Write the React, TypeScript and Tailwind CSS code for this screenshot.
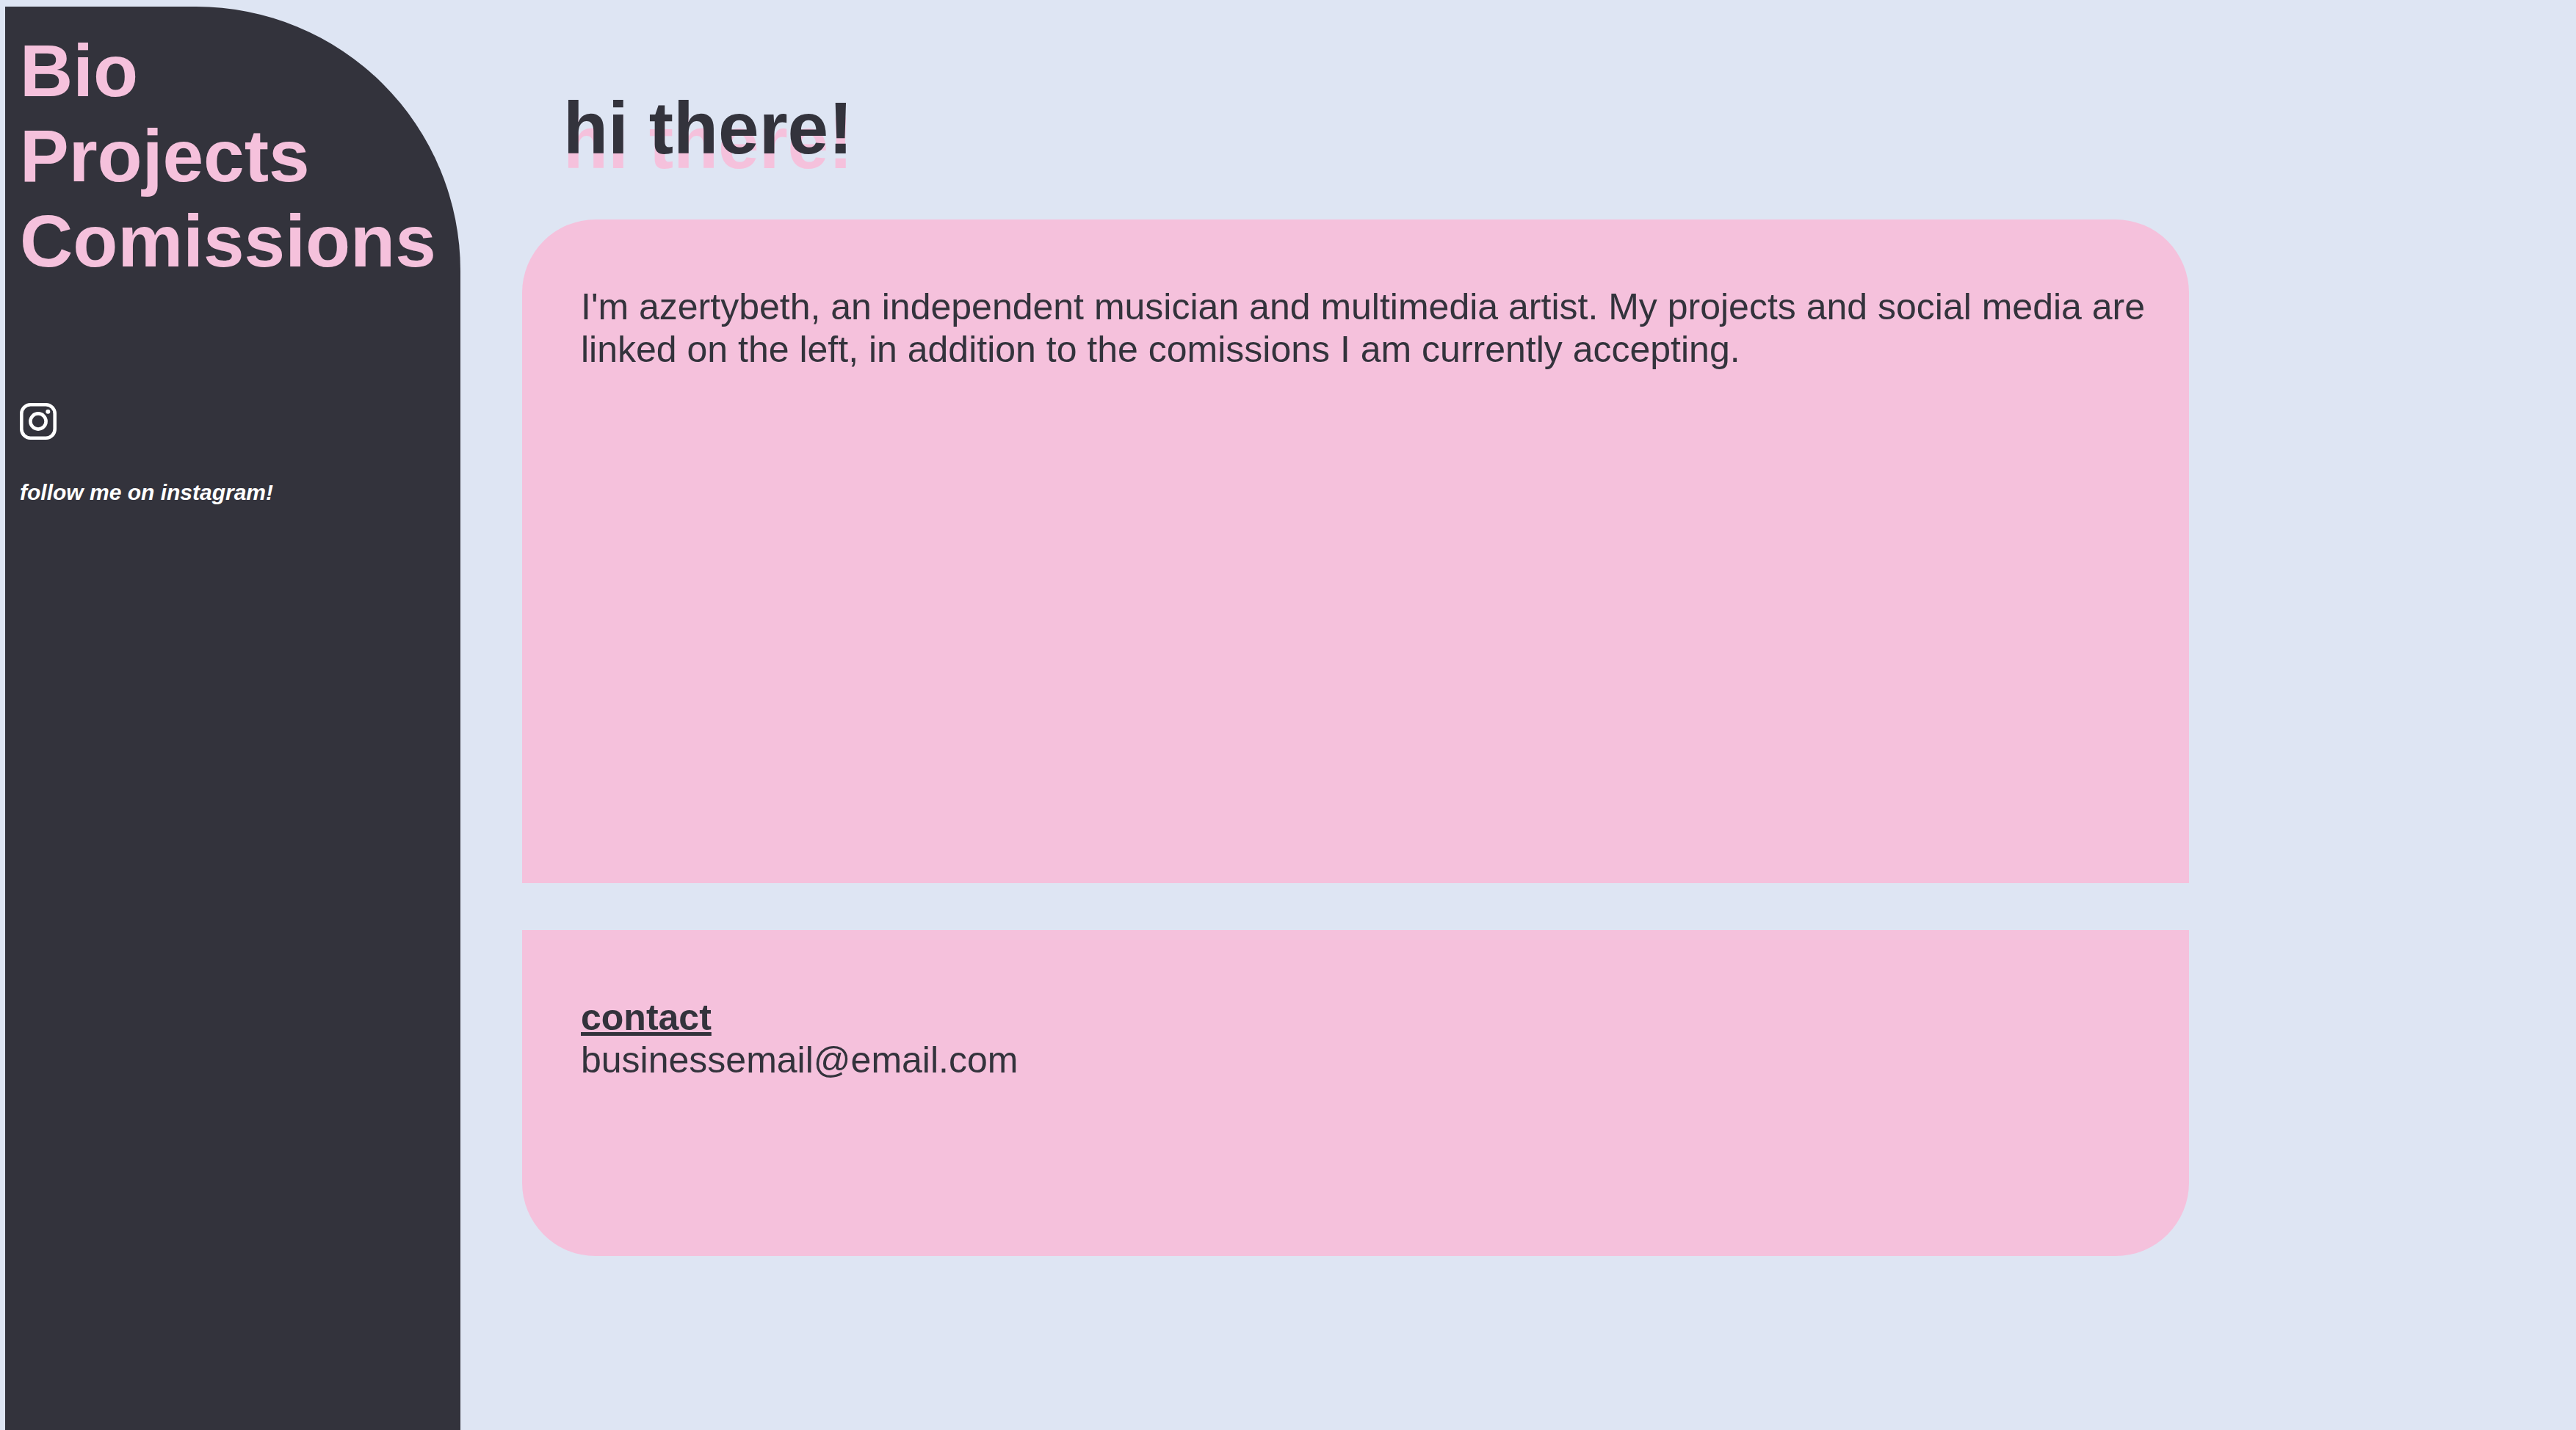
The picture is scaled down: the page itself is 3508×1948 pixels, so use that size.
const links = ["Bio", "Projects", "Comissions"];

function InstagramIcon() {
  return (
    <svg viewBox="0 0 50 50" className="size-[50px]" fill="none" stroke="white" aria-hidden="true">
      <rect x="2.3" y="2.3" width="45.4" height="45.4" rx="12.2" strokeWidth="4.6" />
      <circle cx="25" cy="25" r="10.6" strokeWidth="4.6" />
      <circle cx="38.3" cy="11.7" r="3" fill="white" stroke="none" />
    </svg>
  );
}

function Sidebar() {
  return (
    <aside className="w-[620px] shrink-0 rounded-tr-[360px] bg-[#33333c] px-5 pt-[29px]">
      <nav>
        <ul className="text-[100px] leading-[116px] font-bold text-[#f5c1dc]">
          {links.map((name) => (
            <li key={name}>
              <a href={`#${name.toLowerCase()}`}>{name}</a>
            </li>
          ))}
        </ul>
      </nav>
      <a href="#instagram" aria-label="Instagram" className="mt-[163px] block w-fit">
        <InstagramIcon />
      </a>
      <p className="mt-[55px] text-[30px] leading-[34px] font-bold text-white italic">
        follow me on instagram!
      </p>
    </aside>
  );
}

export default function App() {
  return (
    <div className="flex min-h-screen bg-[#dee5f3] pt-[9px] pl-[7px] font-['Liberation_Sans',Arial,sans-serif] text-[#33333c]">
      <Sidebar />
      <main className="ml-[84px] flex max-w-[2270px] min-w-0 flex-1 flex-col pt-[107px]">
        <h1 className="pl-14 text-[100px] leading-[116px] font-bold [text-shadow:0_20px_0_#f5c1dc]">
          hi there!
        </h1>
        <section className="mt-[67px] min-h-[904px] rounded-t-[100px] bg-[#f5c1dc] pt-[90px] pr-[50px] pl-20 text-[50px] leading-[58px]">
          <p>
            I'm azertybeth, an independent musician and multimedia artist. My projects and social
            media are linked on the left, in addition to the comissions I am currently accepting.
          </p>
        </section>
        <section className="mt-16 min-h-[444px] rounded-b-[100px] bg-[#f5c1dc] pt-[90px] pr-[50px] pl-20 text-[50px] leading-[58px]">
          <h2 className="font-bold underline">contact</h2>
          <p>businessemail@email.com</p>
        </section>
      </main>
    </div>
  );
}
